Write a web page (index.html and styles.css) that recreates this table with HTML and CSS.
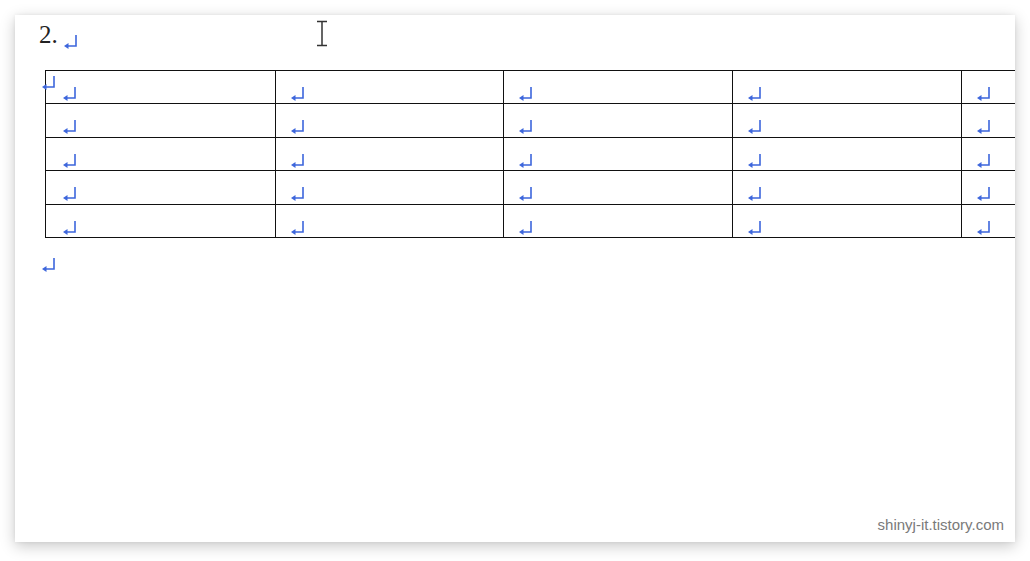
FILE: index.html
```html
<!DOCTYPE html>
<html>
<head>
<meta charset="utf-8">
<link rel="stylesheet" href="styles.css">
</head>
<body>
<div class="sheet">
  <div class="heading"><span class="num">2.</span><svg class="ret ret-head" viewBox="0 0 15 15"><path d="M13 1V12H5" /><path class="head" d="M1 12L5.5 9V15Z"/></svg></div>
  <div class="table-wrap">
    <table class="grid">
      <colgroup><col class="c1"><col class="c2"><col class="c3"><col class="c3"><col class="c3"></colgroup>
      <tbody>
        <tr><td><svg class="ret" viewBox="0 0 15 15"><path d="M13 1V12H5"/><path class="head" d="M1 12L5.5 9V15Z"/></svg></td><td><svg class="ret" viewBox="0 0 15 15"><path d="M13 1V12H5"/><path class="head" d="M1 12L5.5 9V15Z"/></svg></td><td><svg class="ret" viewBox="0 0 15 15"><path d="M13 1V12H5"/><path class="head" d="M1 12L5.5 9V15Z"/></svg></td><td><svg class="ret" viewBox="0 0 15 15"><path d="M13 1V12H5"/><path class="head" d="M1 12L5.5 9V15Z"/></svg></td><td><svg class="ret" viewBox="0 0 15 15"><path d="M13 1V12H5"/><path class="head" d="M1 12L5.5 9V15Z"/></svg></td></tr>
        <tr><td><svg class="ret" viewBox="0 0 15 15"><path d="M13 1V12H5"/><path class="head" d="M1 12L5.5 9V15Z"/></svg></td><td><svg class="ret" viewBox="0 0 15 15"><path d="M13 1V12H5"/><path class="head" d="M1 12L5.5 9V15Z"/></svg></td><td><svg class="ret" viewBox="0 0 15 15"><path d="M13 1V12H5"/><path class="head" d="M1 12L5.5 9V15Z"/></svg></td><td><svg class="ret" viewBox="0 0 15 15"><path d="M13 1V12H5"/><path class="head" d="M1 12L5.5 9V15Z"/></svg></td><td><svg class="ret" viewBox="0 0 15 15"><path d="M13 1V12H5"/><path class="head" d="M1 12L5.5 9V15Z"/></svg></td></tr>
        <tr><td><svg class="ret" viewBox="0 0 15 15"><path d="M13 1V12H5"/><path class="head" d="M1 12L5.5 9V15Z"/></svg></td><td><svg class="ret" viewBox="0 0 15 15"><path d="M13 1V12H5"/><path class="head" d="M1 12L5.5 9V15Z"/></svg></td><td><svg class="ret" viewBox="0 0 15 15"><path d="M13 1V12H5"/><path class="head" d="M1 12L5.5 9V15Z"/></svg></td><td><svg class="ret" viewBox="0 0 15 15"><path d="M13 1V12H5"/><path class="head" d="M1 12L5.5 9V15Z"/></svg></td><td><svg class="ret" viewBox="0 0 15 15"><path d="M13 1V12H5"/><path class="head" d="M1 12L5.5 9V15Z"/></svg></td></tr>
        <tr><td><svg class="ret" viewBox="0 0 15 15"><path d="M13 1V12H5"/><path class="head" d="M1 12L5.5 9V15Z"/></svg></td><td><svg class="ret" viewBox="0 0 15 15"><path d="M13 1V12H5"/><path class="head" d="M1 12L5.5 9V15Z"/></svg></td><td><svg class="ret" viewBox="0 0 15 15"><path d="M13 1V12H5"/><path class="head" d="M1 12L5.5 9V15Z"/></svg></td><td><svg class="ret" viewBox="0 0 15 15"><path d="M13 1V12H5"/><path class="head" d="M1 12L5.5 9V15Z"/></svg></td><td><svg class="ret" viewBox="0 0 15 15"><path d="M13 1V12H5"/><path class="head" d="M1 12L5.5 9V15Z"/></svg></td></tr>
        <tr><td><svg class="ret" viewBox="0 0 15 15"><path d="M13 1V12H5"/><path class="head" d="M1 12L5.5 9V15Z"/></svg></td><td><svg class="ret" viewBox="0 0 15 15"><path d="M13 1V12H5"/><path class="head" d="M1 12L5.5 9V15Z"/></svg></td><td><svg class="ret" viewBox="0 0 15 15"><path d="M13 1V12H5"/><path class="head" d="M1 12L5.5 9V15Z"/></svg></td><td><svg class="ret" viewBox="0 0 15 15"><path d="M13 1V12H5"/><path class="head" d="M1 12L5.5 9V15Z"/></svg></td><td><svg class="ret" viewBox="0 0 15 15"><path d="M13 1V12H5"/><path class="head" d="M1 12L5.5 9V15Z"/></svg></td></tr>
      </tbody>
    </table>
    <svg class="ret ret-anchor" viewBox="0 0 15 15"><path d="M13 1V12H5"/><path class="head" d="M1 12L5.5 9V15Z"/></svg>
  </div>
  <div class="after"><svg class="ret" viewBox="0 0 15 15"><path d="M13 1V12H5"/><path class="head" d="M1 12L5.5 9V15Z"/></svg></div>
  <svg class="ibeam" viewBox="0 0 12 27"><path d="M1 1.5H11M1 25.5H11M6 1.5V25.5"/></svg>
  <div class="watermark">shinyj-it.tistory.com</div>
</div>
</body>
</html>
```
FILE: styles.css
```css
html, body {
  margin: 0;
  padding: 0;
  background: #ffffff;
}
body {
  width: 1030px;
  height: 561px;
  overflow: hidden;
}
.sheet {
  position: relative;
  margin: 15px 0 0 15px;
  width: 1000px;
  height: 527px;
  background: #fff;
  box-shadow: 0 4px 14px rgba(0, 0, 0, 0.22), 0 0 4px rgba(0, 0, 0, 0.06);
  overflow: hidden;
  display: flex;
  flex-direction: column;
}
.heading {
  display: flex;
  align-items: flex-start;
  padding: 5px 0 0 24px;
  height: 35px;
}
.num {
  font-family: "Liberation Serif", "DejaVu Serif", serif;
  font-size: 25px;
  line-height: 30px;
  color: #222;
}
.ret {
  width: 15px;
  height: 15px;
  display: block;
  fill: none;
  stroke: #3d66dc;
  stroke-width: 1.6;
}
.ret .head {
  fill: #3d66dc;
  stroke: none;
}
.ret-head {
  margin: 14px 0 0 5px;
}
.table-wrap {
  position: relative;
  margin: 15px 0 0 30px;
}
.grid {
  border-collapse: collapse;
  table-layout: fixed;
  width: 1145px;
}
.grid .c1 { width: 230px; }
.grid .c2 { width: 228px; }
.grid .c3 { width: 229px; }
.grid td {
  border: 1px solid #111;
  height: 32.4px;
  padding: 0;
  vertical-align: top;
}
.grid td .ret {
  margin: 15px 0 0 14px;
}
.grid td:first-child .ret {
  margin-left: 16px;
}
.ret-anchor {
  position: absolute;
  left: -4px;
  top: 5px;
}
.after {
  padding: 19px 0 0 26px;
}
.ibeam {
  position: absolute;
  left: 301px;
  top: 5px;
  width: 12px;
  height: 27px;
  fill: none;
  stroke: #333;
  stroke-width: 1.5;
}
.watermark {
  position: absolute;
  right: 11px;
  bottom: 9px;
  font-family: "Liberation Sans", Arial, sans-serif;
  font-size: 15px;
  color: #7a7a7a;
}
```
